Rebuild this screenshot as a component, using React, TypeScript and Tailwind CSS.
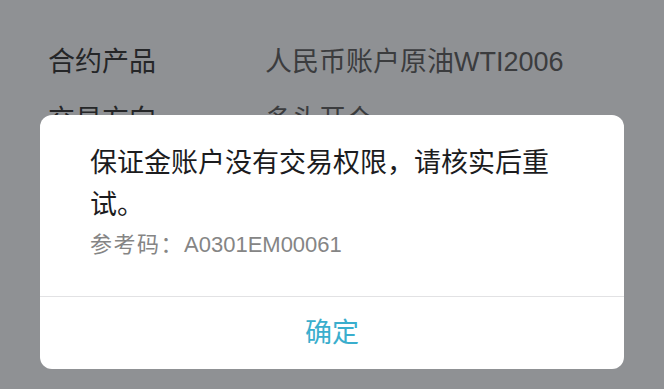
import React from 'react';

const rows = [
  { label: '合约产品', value: '人民币账户原油WTI2006' },
  { label: '交易方向', value: '多头开仓' },
  { label: '委托数量', value: '1手' },
  { label: '委托价格', value: '市价' },
];

export default function App() {
  return (
    <div
      className="relative h-[389px] w-[664px] overflow-hidden bg-[#8f9194]"
      style={{ fontFamily: '"Liberation Sans", "Noto Sans CJK SC", sans-serif' }}
    >
      <div className="pt-[33px]">
        {rows.map((row) => (
          <div key={row.label} className="flex h-[58px] items-center px-[48px] text-[27px]">
            <span className="w-[217px] text-[#252628]">{row.label}</span>
            <span className="text-[#3b3c3e]">{row.value}</span>
          </div>
        ))}
      </div>

      <div className="absolute left-[40px] top-[115px] w-[584px] overflow-hidden rounded-[12px] bg-white">
        <div className="pl-[50px] pr-[60px] pt-[27px] pb-[36px]">
          <p className="text-[27px] leading-[42px] text-[#1c1c1e]">
            保证金账户没有交易权限，请核实后重试。
          </p>
          <p className="mt-[4px] text-[22px] leading-[30px] text-[#858585]">
            <span className="tracking-[1.5px]">参考码：</span>A0301EM00061
          </p>
        </div>
        <div className="h-px bg-[#e2e2e4]" />
        <button className="flex h-[72px] w-full items-center justify-center text-[27px] text-[#3aaecd]">
          确定
        </button>
      </div>
    </div>
  );
}
